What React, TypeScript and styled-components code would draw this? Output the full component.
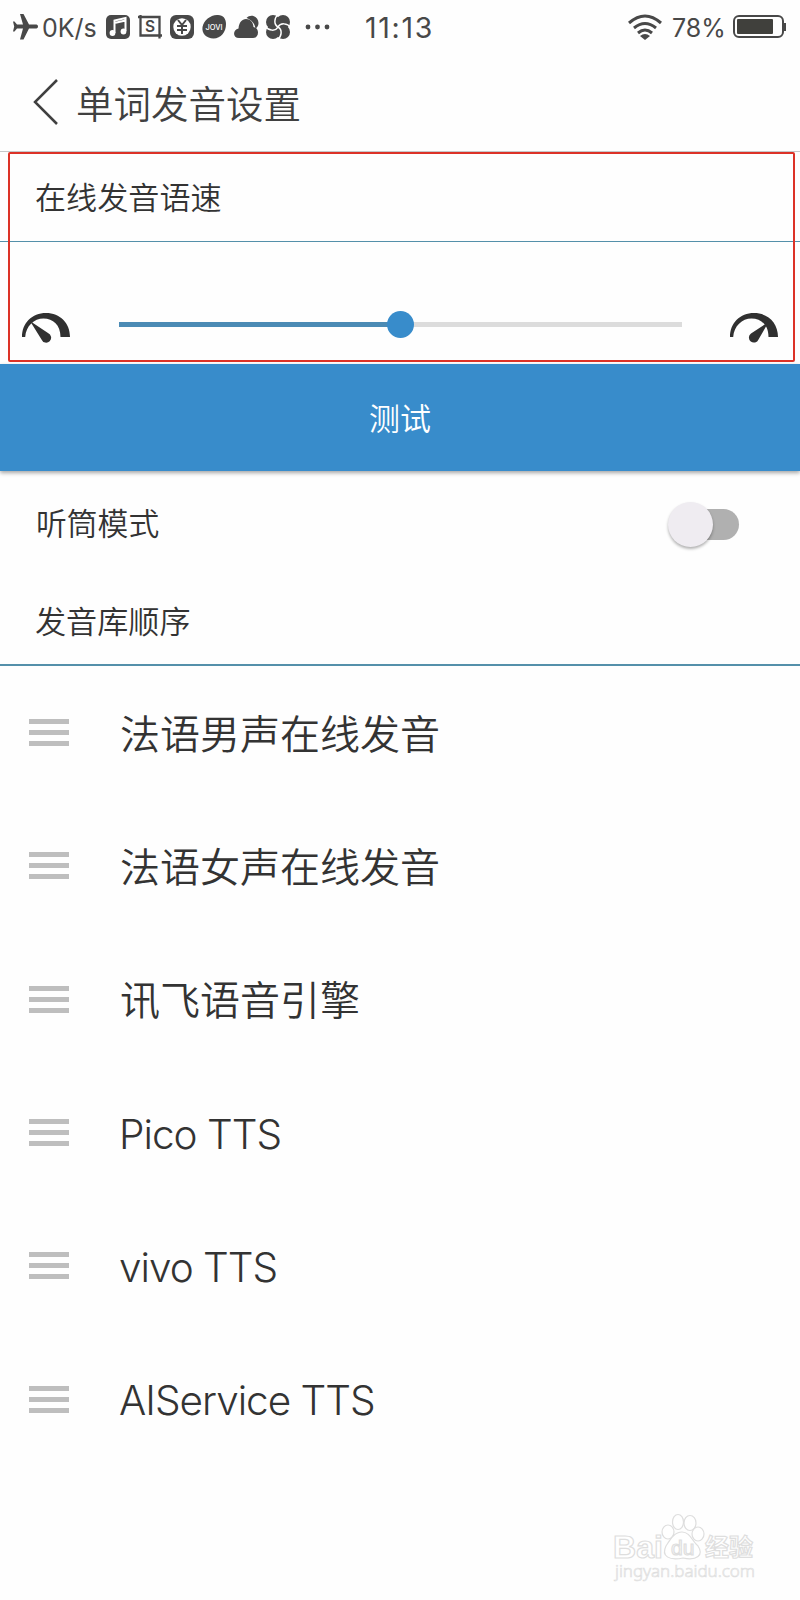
import React from 'react';
import styled, { createGlobalStyle } from 'styled-components';

const Global = createGlobalStyle`
  * { box-sizing: border-box; }
  body { margin: 0; background: #fefefe; }
`;

const Screen = styled.main`
  position: relative;
  display: flex;
  flex-direction: column;
  width: 800px;
  height: 1600px;
  overflow: hidden;
  background: #fefefe;
  color: #333;
  font-family: 'Noto Sans CJK SC', sans-serif;
  font-weight: 350;
`;

const StatusBar = styled.header`
  display: flex;
  align-items: center;
  justify-content: space-between;
  height: 54px;
  padding: 0 13px 0 12px;
  color: #484848;
  font-family: Inter, sans-serif;
  font-weight: 400;
`;

const StatusGroup = styled.div`
  display: flex;
  align-items: center;
  svg { display: block; flex: none; }
`;

const StatusText = styled.span<{ $size: number; $width: number; $left?: number; $track?: number }>`
  display: block;
  width: ${p => p.$width}px;
  margin-left: ${p => p.$left ?? 0}px;
  padding-top: 1px;
  font-size: ${p => p.$size}px;
  letter-spacing: ${p => p.$track ?? 0}px;
  line-height: 54px;
  white-space: nowrap;
`;

const TitleBar = styled.div`
  display: flex;
  align-items: center;
  height: 98px;
  padding-left: 32px;
  border-bottom: 1px solid #c5c8ca;
  color: #404040;
  svg { display: block; margin: 0 17px 1px 0; }
`;

const Title = styled.h1`
  margin: 0;
  padding-bottom: 2px;
  font-size: 37.5px;
  font-weight: 350;
  line-height: 54px;
`;

const SectionHeading = styled.h2<{ $height: number; $line: number }>`
  display: flex;
  align-items: center;
  height: ${p => p.$height}px;
  margin: 0;
  padding: 0 0 3px 35px;
  border-bottom: ${p => p.$line}px solid #5490aa;
  font-size: 31.1px;
  font-weight: 350;
`;

const SpeedRow = styled.div`
  display: flex;
  align-items: center;
  justify-content: space-between;
  height: 122px;
  padding: 43px 21px 0 22px;
`;

const GaugeIcon = styled.svg`
  display: block;
  flex: none;
  margin-top: 6px;
`;

const Track = styled.div`
  position: relative;
  width: 563px;
  height: 5px;
  margin-right: 1px;
  background: linear-gradient(to right, #4b8bb5 50%, #dcdcdc 50%);
`;

const Thumb = styled.span`
  position: absolute;
  left: 268px;
  top: -11px;
  width: 27px;
  height: 27px;
  border-radius: 50%;
  background: #388ccb;
`;

const TestButton = styled.button`
  height: 107px;
  flex: none;
  padding: 0 0 2px;
  border: 0;
  background: #388ccb;
  box-shadow: 0 2px 4px rgba(0, 0, 0, 0.35);
  color: #fff;
  font: 350 31px 'Noto Sans CJK SC', sans-serif;
`;

const SwitchRow = styled.div`
  display: flex;
  align-items: center;
  justify-content: space-between;
  height: 106px;
  padding: 0 61px 0 36px;
  font-size: 30.8px;
`;

const SwitchLabel = styled.span`
  padding-bottom: 5px;
`;

const Switch = styled.span`
  position: relative;
  width: 50px;
  height: 31px;
  border-radius: 16px;
  background: #b0b0b0;
`;

const Knob = styled.span`
  position: absolute;
  left: -21px;
  top: -7px;
  width: 45px;
  height: 45px;
  border-radius: 50%;
  background: #efecf1;
  box-shadow: 0 2px 3px rgba(0, 0, 0, 0.3);
`;

const EngineList = styled.ul`
  margin: 0;
  padding: 0;
  list-style: none;
`;

const EngineRow = styled.li`
  display: flex;
  align-items: center;
  height: 133.3px;
  padding-left: 29px;
`;

const Handle = styled.span`
  display: flex;
  flex-direction: column;
  gap: 6px;
  width: 40px;
  margin-right: 51px;
`;

const HandleBar = styled.i`
  height: 5px;
  background: #bebebe;
`;

const EngineName = styled.span<{ $latin: boolean }>`
  margin-left: ${p => (p.$latin ? -1 : 0)}px;
  padding: ${p => (p.$latin ? '4px 0 0' : '0 0 2px')};
  font-family: ${p => (p.$latin ? "Inter, sans-serif" : "'Noto Sans CJK SC', sans-serif")};
  font-size: ${p => (p.$latin ? 40.5 : 40)}px;
  font-weight: ${p => (p.$latin ? 300 : 350)};
  letter-spacing: ${p => (p.$latin ? -1 : 0)}px;
  line-height: 60px;
`;

const Highlight = styled.div`
  position: absolute;
  left: 8px;
  top: 152px;
  width: 787px;
  height: 210px;
  border: 2px solid #dc3227;
  border-radius: 2px;
`;

const Watermark = styled.svg`
  position: absolute;
  left: 600px;
  top: 1500px;
`;

const engines = ['法语男声在线发音', '法语女声在线发音', '讯飞语音引擎', 'Pico TTS', 'vivo TTS', 'AIService TTS'];

const Gauge = ({ fast }: { fast?: boolean }) => (
  <GaugeIcon width="49" height="32" viewBox="0 0 49 32" fill="#303030">
    <path d="M0 25C0 11 10 1 24 1s24 10 24 24H38.500C38.500 13 31 6.500 21.500 6.500S4 14 3.200 25Z" />
    {fast
      ? <path d="M38.500 10 21 21.500A5 5 0 1 0 28.500 27.500Z" />
      : <path d="M8 9 19.500 27.500A5 5 0 1 0 26 21Z" />}
  </GaugeIcon>
);

const StatusIcons = () => (
  <svg width="240" height="40" viewBox="98 7 240 40" fill="#484848">
    <rect x="106" y="15" width="24" height="24" rx="5" />
    <path d="M114.500 33V20.500l11-2.500v13M114.500 23l11-2.500" stroke="#fff" strokeWidth="2" fill="none" />
    <circle cx="112.500" cy="33" r="2.900" fill="#fff" /><circle cx="123.500" cy="31.500" r="2.900" fill="#fff" />
    <path d="M138 17h21.500v21.500M140.500 15v20.500H162" fill="none" stroke="#484848" strokeWidth="2.300" />
    <text x="150" y="32" textAnchor="middle" fontFamily="Inter" fontSize="15.500" fontWeight="600">S</text>
    <rect x="170" y="15" width="24" height="24" rx="6" /><circle cx="182" cy="27" r="8.700" fill="#fff" />
    <path d="m178 20 4 5 4-5M177 26h10M177 30h10M182 25v9" fill="none" stroke="#484848" strokeWidth="2" />
    <path d="M202.500 27C204 20 210 15.500 217 15c6-.5 9 3.500 9 9 0 8-5 14.500-12.500 14.500-7 0-12-5-11-11.500Z" />
    <text x="214" y="30" textAnchor="middle" fontFamily="Inter" fontSize="7.500" fontWeight="500" fill="#fff" textLength="17">JOVI</text>
    <path d="M246.500 18c4-4.500 12-2 12 5 0 3-1.500 4.500-3 5.500-1-5.500-4-8.500-9-10.500Z" />
    <path d="M239 38c-6.500 0-6.500-8-.5-9.500.5-6 3.500-9.500 7.500-9.500 4.500 0 7 3 7.500 8 3 .5 4.500 3 4.500 5.500 0 4-2.500 5.500-5 5.500Z" />
    {[0, 90, 180, 270].map(a => (
      <circle key={a} cx="273" cy="22" r="7" transform={`rotate(${a} 278 27)`} />
    ))}
    {[0, 90, 180, 270].map(a => (
      <path key={a} d="M278 27C273.500 24.500 274 18 278.500 14" fill="none" stroke="#fefefe" strokeWidth="1.500" transform={`rotate(${a} 278 27)`} />
    ))}
    <circle cx="308" cy="27" r="2.400" /><circle cx="317.500" cy="27" r="2.400" /><circle cx="327" cy="27" r="2.400" />
  </svg>
);

export default function App() {
  return (
    <>
      <Global />
      <Screen>
        <StatusBar>
          <StatusGroup>
            <svg width="27" height="28" viewBox="0 0 27 28" fill="#484848">
              <path d="M26 13.500C26 12 25 11.500 23.500 11.500H17L11.500 1H8l3 10.500H5L2.500 8.500H1l1.200 5L1 18.500h1.500l2.500-3h6L8 26.500h3.500L17 15.500h6.500c1.500 0 2.500-.5 2.500-2Z" />
            </svg>
            <StatusText $size={25} $width={56} $left={3}>0K/s</StatusText>
            <StatusIcons />
            <StatusText $size={28.5} $width={80} $left={27} $track={1.7}>11:13</StatusText>
          </StatusGroup>
          <StatusGroup>
            <svg width="34" height="26" viewBox="0 0 34 26" fill="none" stroke="#484848" strokeWidth="3">
              <path d="M1 9Q17-5 33 9M6 14q11-9 22 0M10 19q7-6 14 0" />
              <path d="m12 22 5 4 5-4q-5-4-10 0Z" fill="#484848" stroke="none" />
            </svg>
            <StatusText $size={25} $width={61} $left={10} $track={0}>78%</StatusText>
            <svg width="54" height="24" viewBox="0 0 54 24">
              <rect x="1" y="1" width="49" height="21" rx="5" fill="none" stroke="#484848" strokeWidth="2" />
              <rect x="4" y="4" width="36" height="15" rx="1" fill="#40403c" />
              <path d="M51 8h2v8h-2Z" fill="#484848" />
            </svg>
          </StatusGroup>
        </StatusBar>
        <TitleBar>
          <svg width="27" height="46" viewBox="0 0 27 46" fill="none" stroke="#404040" strokeWidth="2.500"><path d="M25 1 3 23l22 22" /></svg>
          <Title>单词发音设置</Title>
        </TitleBar>
        <SectionHeading $height={90} $line={1}>在线发音语速</SectionHeading>
        <SpeedRow>
          <Gauge />
          <Track><Thumb /></Track>
          <Gauge fast />
        </SpeedRow>
        <TestButton>测试</TestButton>
        <SwitchRow>
          <SwitchLabel>听筒模式</SwitchLabel>
          <Switch><Knob /></Switch>
        </SwitchRow>
        <SectionHeading $height={89} $line={2}>发音库顺序</SectionHeading>
        <EngineList>
          {engines.map(name => (
            <EngineRow key={name}>
              <Handle><HandleBar /><HandleBar /><HandleBar /></Handle>
              <EngineName $latin={/^[A-Za-z]/.test(name)}>{name}</EngineName>
            </EngineRow>
          ))}
        </EngineList>
        <Highlight />
        <Watermark width="170" height="90" viewBox="600 1500 170 90" fill="#fff" stroke="#dedede" strokeWidth="1.200">
          <text x="613" y="1558" fontFamily="Liberation Sans" fontWeight="700" fontSize="32" textLength="50">Bai</text>
          <ellipse cx="668" cy="1532" rx="6" ry="7" /><ellipse cx="678" cy="1522" rx="5.500" ry="7.500" />
          <ellipse cx="690" cy="1523" rx="6" ry="7.500" /><ellipse cx="698" cy="1534" rx="6" ry="7" />
          <path d="M682 1532c8 0 10 9 16 14 6 9-1 15-15 12-14 3-22-2-17-12 4-6 8-14 16-14Z" />
          <text x="671" y="1555" fontFamily="Liberation Sans" fontSize="21">du</text>
          <text x="705" y="1556" fontFamily="Noto Sans CJK SC" fontWeight="700" fontSize="24">经验</text>
          <text x="615" y="1577" fontFamily="Noto Sans" fontSize="17" strokeWidth=".7" textLength="140">jingyan.baidu.com</text>
        </Watermark>
      </Screen>
    </>
  );
}
